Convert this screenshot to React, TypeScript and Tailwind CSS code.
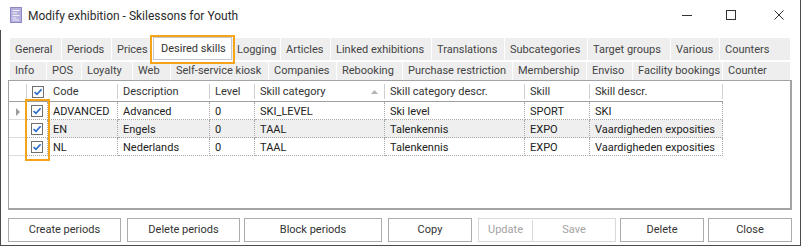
import React from "react";

const tabsTop = [
  { label: "General", w: "w-[52px]" },
  { label: "Periods", w: "w-[50px]" },
  { label: "Prices", w: "w-[41px]" },
  { label: "Desired skills", w: "w-[79px]", active: true },
  { label: "Logging", w: "w-[49px]" },
  { label: "Articles", w: "w-[50px]" },
  { label: "Linked exhibitions", w: "w-[101px]" },
  { label: "Translations", w: "w-[73px]" },
  { label: "Subcategories", w: "w-[83px]" },
  { label: "Target groups", w: "w-[83px]" },
  { label: "Various", w: "w-[49px]" },
  { label: "Counters", w: "w-[71px]" },
];

const tabsBottom = [
  { label: "Info", w: "w-[37px]" },
  { label: "POS", w: "w-[35px]" },
  { label: "Loyalty", w: "w-[51px]" },
  { label: "Web", w: "w-[38px]" },
  { label: "Self-service kiosk", w: "w-[98px]" },
  { label: "Companies", w: "w-[68px]" },
  { label: "Rebooking", w: "w-[66px]" },
  { label: "Purchase restriction", w: "w-[110px]" },
  { label: "Membership", w: "w-[74px]" },
  { label: "Enviso", w: "w-[46px]" },
  { label: "Facility bookings", w: "w-[90px]" },
  { label: "Counter", w: "w-[68px]" },
];

const columns = [
  { key: "code", label: "Code", w: "w-[70px]" },
  { key: "desc", label: "Description", w: "w-[92px]" },
  { key: "level", label: "Level", w: "w-[45px]" },
  { key: "cat", label: "Skill category", w: "w-[130px]", sorted: true },
  { key: "catDesc", label: "Skill category descr.", w: "w-[140px]" },
  { key: "skill", label: "Skill", w: "w-[65px]" },
  { key: "skillDesc", label: "Skill descr.", w: "w-[133px]" },
] as const;

type Row = Record<(typeof columns)[number]["key"], string> & { current?: boolean; alt?: boolean };

const rows: Row[] = [
  { code: "ADVANCED", desc: "Advanced", level: "0", cat: "SKI_LEVEL", catDesc: "Ski level", skill: "SPORT", skillDesc: "SKI", current: true },
  { code: "EN", desc: "Engels", level: "0", cat: "TAAL", catDesc: "Talenkennis", skill: "EXPO", skillDesc: "Vaardigheden exposities", alt: true },
  { code: "NL", desc: "Nederlands", level: "0", cat: "TAAL", catDesc: "Talenkennis", skill: "EXPO", skillDesc: "Vaardigheden exposities" },
];

function Check() {
  return (
    <span className="w-[12px] h-[12px] border border-[#707070] bg-white flex items-center justify-center">
      <svg width="10" height="10" viewBox="0 0 10 10">
        <path d="M1.6 5.1 L4 7.4 L8.6 2.3" stroke="#2d6dcc" strokeWidth="1.7" fill="none" />
      </svg>
    </span>
  );
}

function TitleBar() {
  return (
    <div className="h-[30px] flex items-center pl-[10px]">
      <svg width="12" height="16" viewBox="0 0 12 16">
        <rect x="0.5" y="0.5" width="11" height="15" fill="#b4b1de" stroke="#8c88c6" />
        <path d="M2.5 3.5 H9.5 M2.5 6 H7 M2.5 8.5 H9.5 M2.5 11 H6.5 M2.5 13 H9" stroke="#eeedf9" strokeWidth="1" />
      </svg>
      <span className="ml-[6px] pt-px text-[12px] text-[#2b2b2b]">Modify exhibition - Skilessons for Youth</span>
      <div className="ml-auto flex h-[30px]">
        <div className="w-[46px] flex items-center pl-[20px]">
          <span className="w-[10px] h-px bg-[#333]" />
        </div>
        <div className="w-[46px] flex items-center pl-[18px]">
          <span className="w-[10px] h-[10px] border border-[#333]" />
        </div>
        <div className="w-[46px] flex items-center pl-[20px]">
          <svg width="10" height="10" viewBox="0 0 10 10">
            <path d="M0.5 0.5 L9.5 9.5 M9.5 0.5 L0.5 9.5" stroke="#333" strokeWidth="1" />
          </svg>
        </div>
      </div>
    </div>
  );
}

function Tabs() {
  return (
    <div className="ml-[9px]">
      <div className="flex h-[22px] items-start">
        {tabsTop.map((t) =>
          t.active ? (
            <div
              key={t.label}
              className={`${t.w} h-[23px] -mt-px bg-white border border-[#c8c8c8] flex items-center pl-[7px] pt-[1px] text-[#333] whitespace-nowrap`}
            >
              {t.label}
            </div>
          ) : (
            <div
              key={t.label}
              className={`${t.w} h-[22px] bg-[#eeeeee] border-r border-white flex items-center pl-[5px] pt-[2px] text-[#444] whitespace-nowrap overflow-hidden`}
            >
              {t.label}
            </div>
          )
        )}
      </div>
      <div className="flex h-[18px] mt-[2px]">
        {tabsBottom.map((t) => (
          <div
            key={t.label}
            className={`${t.w} h-[18px] bg-[#eeeeee] border-r border-white flex items-center pl-[5px] pt-[1px] text-[#444] whitespace-nowrap overflow-hidden`}
          >
            {t.label}
          </div>
        ))}
      </div>
    </div>
  );
}

function Grid() {
  return (
    <div className="ml-[7px] w-[784px] h-[130px] border border-[#a3a3a3] border-r-2 border-b-2 flex flex-col bg-white">
      {/* header */}
      <div className="flex h-[21px]">
        <div className="w-[18px] border-b border-[#a0a0a0] flex items-center justify-end">
          <span className="w-px h-[15px] bg-[#d0d0d0]" />
        </div>
        <div className="w-[21px] border-b border-[#a0a0a0] flex items-center justify-center pt-[1px]">
          <Check />
        </div>
        {columns.map((c) => (
          <div key={c.key} className={`${c.w} border-b border-[#a0a0a0] flex items-center`}>
            <span className="flex-1 pl-[5px] pt-[3px] text-[#333] whitespace-nowrap overflow-hidden">{c.label}</span>
            {"sorted" in c && (
              <svg width="7" height="4" viewBox="0 0 7 4" className="mr-[6px] mt-[2px]">
                <polygon points="0,4 3.5,0 7,4" fill="#b3b3b3" />
              </svg>
            )}
            <span className="w-px h-[15px] bg-[#cfcfcf]" />
          </div>
        ))}
      </div>
      {/* rows */}
      {rows.map((r) => (
        <div key={r.code} className="flex h-[18px]">
          <div className="w-[18px] border-b border-r border-[#dcdcdc] flex items-center pl-[7px] pt-[2px]">
            {r.current && (
              <svg width="4" height="8" viewBox="0 0 4 8">
                <polygon points="0,0 4,4 0,8" fill="#9c9c9c" />
              </svg>
            )}
          </div>
          <div className="w-[21px] border-b border-r border-dotted border-[#a8a8a8] flex items-center justify-center pt-[1px]">
            <Check />
          </div>
          {columns.map((c) => (
            <div
              key={c.key}
              className={`${c.w} border-b border-r border-dotted border-[#a8a8a8] flex items-center pl-[5px] pt-[3px] text-[#222] whitespace-nowrap overflow-hidden ${r.alt ? "bg-[#efefef]" : ""}`}
            >
              {r[c.key]}
            </div>
          ))}
        </div>
      ))}
      <div className="flex-1" />
    </div>
  );
}

function Buttons() {
  const btn = "h-[24px] border border-[#acacac] bg-white flex items-center justify-center pt-px text-[#333]";
  return (
    <div className="flex mt-[8px] h-[24px]">
      <div className={`${btn} ml-[7px] w-[113px]`}>Create periods</div>
      <div className={`${btn} ml-[6px] w-[113px]`}>Delete periods</div>
      <div className={`${btn} ml-[4px] w-[138px]`}>Block periods</div>
      <div className={`${btn} ml-[6px] w-[84px]`}>Copy</div>
      <div className="ml-[6px] w-[138px] h-[24px] border border-[#dadada] flex pt-px text-[#a3a3a3]">
        <div className="w-[54px] border-r border-[#dadada] flex items-center justify-center">Update</div>
        <div className="flex-1 flex items-center justify-center">Save</div>
      </div>
      <div className={`${btn} ml-[4px] w-[84px]`}>Delete</div>
      <div className={`${btn} ml-[4px] w-[84px]`}>Close</div>
    </div>
  );
}

export default function App() {
  return (
    <div className="relative w-[804px] h-[247px] bg-white font-['Roboto',sans-serif] text-[11px] overflow-hidden">
      <div className="w-[801px] h-[246px] flex flex-col border-r border-b border-[#4b4b4b]">
        <TitleBar />
        <div className="flex-1 flex flex-col border-l border-[#4b4b4b] pt-[8px]">
          <Tabs />
          <Grid />
          <Buttons />
        </div>
      </div>
      {/* highlight annotations */}
      <div className="absolute left-[150px] top-[35px] w-[85px] h-[29px] border-2 border-[#f4a418]" />
      <div className="absolute left-[25px] top-[99px] w-[25px] h-[62px] border-2 border-[#f4a418]" />
    </div>
  );
}
